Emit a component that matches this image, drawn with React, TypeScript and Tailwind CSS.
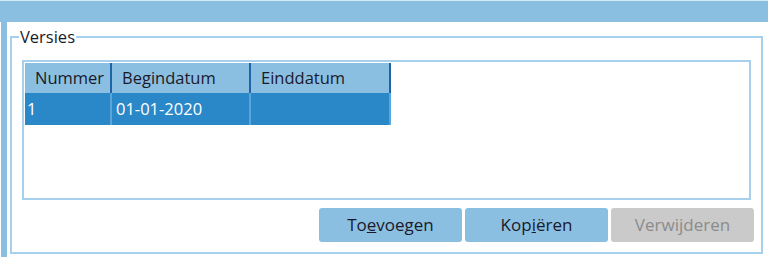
import React from "react";

const COLS = [
  { label: "Nummer", w: "w-[87px]" },
  { label: "Begindatum", w: "w-[139px]" },
  { label: "Einddatum", w: "w-[140px]" },
];

const ROWS = [["1", "01-01-2020", ""]];

function Btn({ children, disabled }: { children: React.ReactNode; disabled?: boolean }) {
  return (
    <button
      disabled={disabled}
      className={
        disabled
          ? "w-[143px] h-[34px] rounded-[3px] bg-[#cacaca] text-[#8c8c8c] text-[17px]"
          : "w-[143px] h-[34px] rounded-[3px] bg-[#8bbfe2] text-[#1a1a2a] text-[17px]"
      }
    >
      {children}
    </button>
  );
}

export default function App() {
  return (
    <div
      className="w-[768px] h-[257px] bg-white flex flex-col overflow-hidden"
      style={{ fontFamily: '"Open Sans", "DejaVu Sans", sans-serif' }}
    >
      {/* title strip */}
      <div className="h-[22px] bg-[#8bbfe2] border-t border-[#d6e9f6] shrink-0" />

      <div className="flex flex-1">
        <div className="w-[6px] bg-[#8bbfe2] ml-[1px]" />

        <fieldset className="ml-[3px] mt-[6px] w-[753px] h-[226px] border-2 border-[#a6d0ec] px-[10px]">
          <legend className="-ml-[3px] px-[1px] text-[16.5px] leading-[18px] text-[#1a1a2a]">Versies</legend>

          {/* list */}
          <div className="mt-[14px] h-[140px] border-2 border-[#a6d0ec] p-[1px]">
            <div className="flex h-[30px] w-fit bg-[#8bbfe2]">
              {COLS.map((c) => (
                <div
                  key={c.label}
                  className={`${c.w} border-r-2 border-[#1f64a8] pl-[10px] flex items-center text-[16.5px] text-[#1a1a2a]`}
                >
                  {c.label}
                </div>
              ))}
            </div>
            {ROWS.map((r, i) => (
              <div key={i} className="flex h-[32px] w-fit bg-[#2b88c8]">
                {r.map((v, j) => (
                  <div
                    key={j}
                    className={`${COLS[j].w} border-r-2 border-[#5aa6da] ${j === 0 ? "pl-[2px]" : "pl-[4px]"} flex items-center text-[16.5px] text-white`}
                  >
                    {v}
                  </div>
                ))}
              </div>
            ))}
          </div>

          {/* buttons */}
          <div className="flex justify-end gap-[3px] mt-[8px] -mr-[3px]">
            <Btn>
              To<span className="underline">e</span>voegen
            </Btn>
            <Btn>
              Kop<span className="underline">i</span>ëren
            </Btn>
            <Btn disabled>
              Verwi<span className="underline">j</span>deren
            </Btn>
          </div>
        </fieldset>
      </div>
    </div>
  );
}
